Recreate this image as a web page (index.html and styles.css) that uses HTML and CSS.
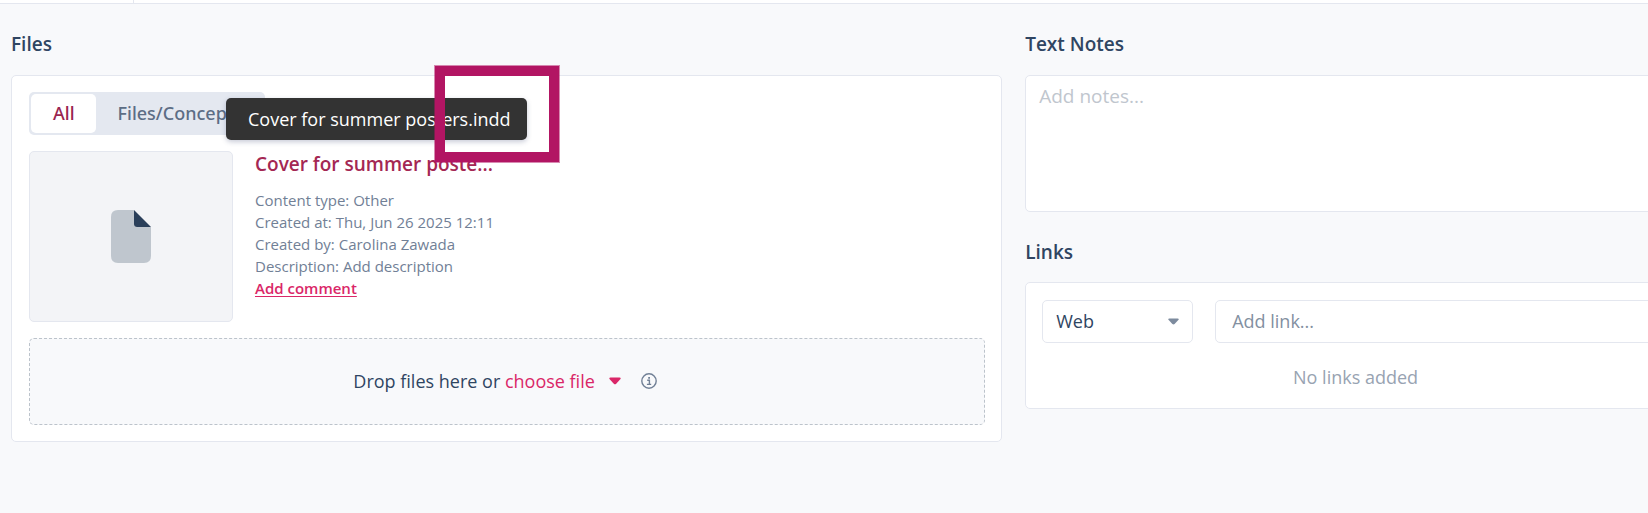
FILE: index.html
```html
<!DOCTYPE html>
<html lang="en">
<head>
<meta charset="utf-8">
<title>Files</title>
<link rel="stylesheet" href="styles.css">
</head>
<body>
<header class="topbar"><div class="topbar-tab"></div></header>
<main class="layout">
  <section class="column">
    <h2 class="heading">Files</h2>
    <div class="panel files">
      <div class="segmented">
        <button class="segment segment-active" type="button">All</button>
        <button class="segment" type="button">Files/Concepts</button>
      </div>
      <article class="file">
        <div class="thumb">
          <svg width="40" height="53" viewBox="0 0 40 53" aria-hidden="true">
            <path fill="#bfc6ce" d="M7 0H23V14Q23 17 26 17H40V46Q40 53 33 53H7Q0 53 0 46V7Q0 0 7 0Z"/>
            <path fill="#2a3f5a" d="M23 0L40 17H26Q23 17 23 14Z"/>
          </svg>
        </div>
        <div class="info">
          <h3 class="title">Cover for summer poste...</h3>
          <p class="meta">Content type: Other</p>
          <p class="meta">Created at: Thu, Jun 26 2025 12:11</p>
          <p class="meta">Created by: Carolina Zawada</p>
          <p class="meta">Description: Add description</p>
          <a class="comment" href="#">Add comment</a>
        </div>
      </article>
      <div class="dropzone">
        <span>Drop files here or <button class="choose" type="button">choose file</button></span>
        <svg class="drop-caret" width="12" height="8" viewBox="0 0 12 8" aria-hidden="true"><path fill="#da2768" d="M1.5 .5h9q1.7 0 1 1.5L7.2 6.8q-1.2 1-2.4 0L.5 2Q-.2.5 1.5.5Z"/></svg>
        <svg class="drop-info" width="16" height="16" viewBox="0 0 16 16" fill="none" stroke="#718096" stroke-width="1.4" aria-hidden="true"><circle cx="8" cy="8" r="7.2"/><path d="M6.2 7.3H8.4V11.3M5.9 11.4H10.2"/><path stroke-width="1.8" d="M7.2 4.8H9"/></svg>
      </div>
      <div class="tooltip" role="tooltip">Cover for summer posters.indd</div>
      <div class="marker"></div>
    </div>
  </section>
  <section class="column">
    <h2 class="heading"><label for="notes">Text Notes</label></h2>
    <textarea class="notes" id="notes" placeholder="Add notes..."></textarea>
    <h2 class="heading heading-links">Links</h2>
    <div class="panel links">
      <div class="link-row">
        <div class="select-wrap">
          <select class="field select" aria-label="Link type"><option>Web</option></select>
          <svg class="select-caret" width="11" height="7" viewBox="0 0 12 8" preserveAspectRatio="none" aria-hidden="true"><path fill="#7d8b9e" d="M1.5 .5h9q1.7 0 1 1.5L7.2 6.8q-1.2 1-2.4 0L.5 2Q-.2.5 1.5.5Z"/></svg>
        </div>
        <input class="field link-input" type="text" aria-label="Link" placeholder="Add link...">
      </div>
      <p class="empty">No links added</p>
    </div>
  </section>
</main>
</body>
</html>
```
FILE: styles.css
```css
* { box-sizing: border-box; }
body {
  margin: 0;
  overflow-x: hidden;
  background: #f8f9fb;
  color: #2f4562;
  font: 18px/24px "Open Sans", "Noto Sans", sans-serif;
}
h2, h3, p { margin: 0; }
button, input, select, textarea { font: inherit; }
button { border: 0; background: none; padding: 0; cursor: pointer; }
.topbar { height: 4px; background: #fff; border-bottom: 1px solid #e4e7ef; }
.topbar-tab { width: 134px; height: 3px; border-right: 1px solid #e4e7ef; }
.layout {
  display: grid;
  grid-template-columns: 3fr 2fr;
  gap: 23px;
  margin: 28px -38px 0 11px;
}
.column { min-width: 0; }
.heading { font-size: 19px; font-weight: 600; line-height: 24px; margin-bottom: 19px; }
.panel { background: #fff; border: 1px solid #e4e7ef; border-radius: 5px; }
.files { position: relative; padding: 16px 16px 16px 17px; }
.segmented { display: inline-flex; background: #e4e8f0; border-radius: 5px; padding: 2px; vertical-align: top; }
.segment { height: 39px; padding: 0 21px 2px 22px; border-radius: 5px; color: #5c6d85; font-family: "Noto Sans", sans-serif; font-weight: 500; }
.segment-active { background: #fff; color: #9a2550; }
.file { display: flex; gap: 22px; margin-top: 16px; }
.thumb {
  display: flex; align-items: center; justify-content: center;
  width: 204px; height: 171px; flex: none;
  background: #f3f4f7; border: 1px solid #e4e7ef; border-radius: 5px;
}
.info { color: #718096; font-size: 15px; line-height: 22px; min-width: 0; }
.title {
  white-space: nowrap;
  color: #a42753; font-size: 19px; font-weight: 600; line-height: 26px; margin-bottom: 12px;
}
.comment { color: #da2768; font-weight: 600; text-underline-offset: 2px; }
.dropzone {
  display: flex; align-items: center; justify-content: center;
  height: 87px; margin-top: 16px; padding: 0 4px 2px 0;
  background: #f8f9fb; border: 1px dashed #bcc3cb; border-radius: 5px;
}
.choose { color: #da2768; }
.drop-caret { margin-left: 14px; }
.drop-info { margin-left: 20px; }
.tooltip {
  position: absolute; left: 214px; top: 22px;
  padding: 9px 16px 9px 22px; border-radius: 5px; white-space: nowrap;
  background: #333; color: #fff; box-shadow: 0 2px 5px rgba(40, 50, 100, .25);
}
.marker {
  position: absolute; left: 423px; top: -10px; width: 124px; height: 96px;
  border: 10px solid #b21563; box-shadow: 0 0 0 1px rgba(178, 21, 99, .5);
}
.notes {
  display: block; width: 100%; height: 137px; padding: 8px 13px; resize: none;
  background: #fff; border: 1px solid #e4e7ef; border-radius: 5px; color: inherit; font-size: 19px;
}
.notes::placeholder { color: #c0c6ce; opacity: 1; }
.heading-links { margin-top: 28px; margin-bottom: 18px; }
.links { padding: 17px 16px 19px; }
.link-row { display: flex; gap: 22px; }
.select-wrap { position: relative; flex: none; width: 151px; }
.field { width: 100%; height: 43px; border: 1px solid #e4e7ef; border-radius: 5px; background: #fff; color: inherit; }
.select { appearance: none; padding: 0 13px 2px; }
.select-caret { position: absolute; right: 14px; top: 18px; pointer-events: none; }
.link-input { flex: 1; min-width: 0; padding: 0 16px 2px; }
.link-input::placeholder { color: #8390a1; opacity: 1; }
.empty { margin-top: 22px; text-align: center; color: #98a3b2; }
```
